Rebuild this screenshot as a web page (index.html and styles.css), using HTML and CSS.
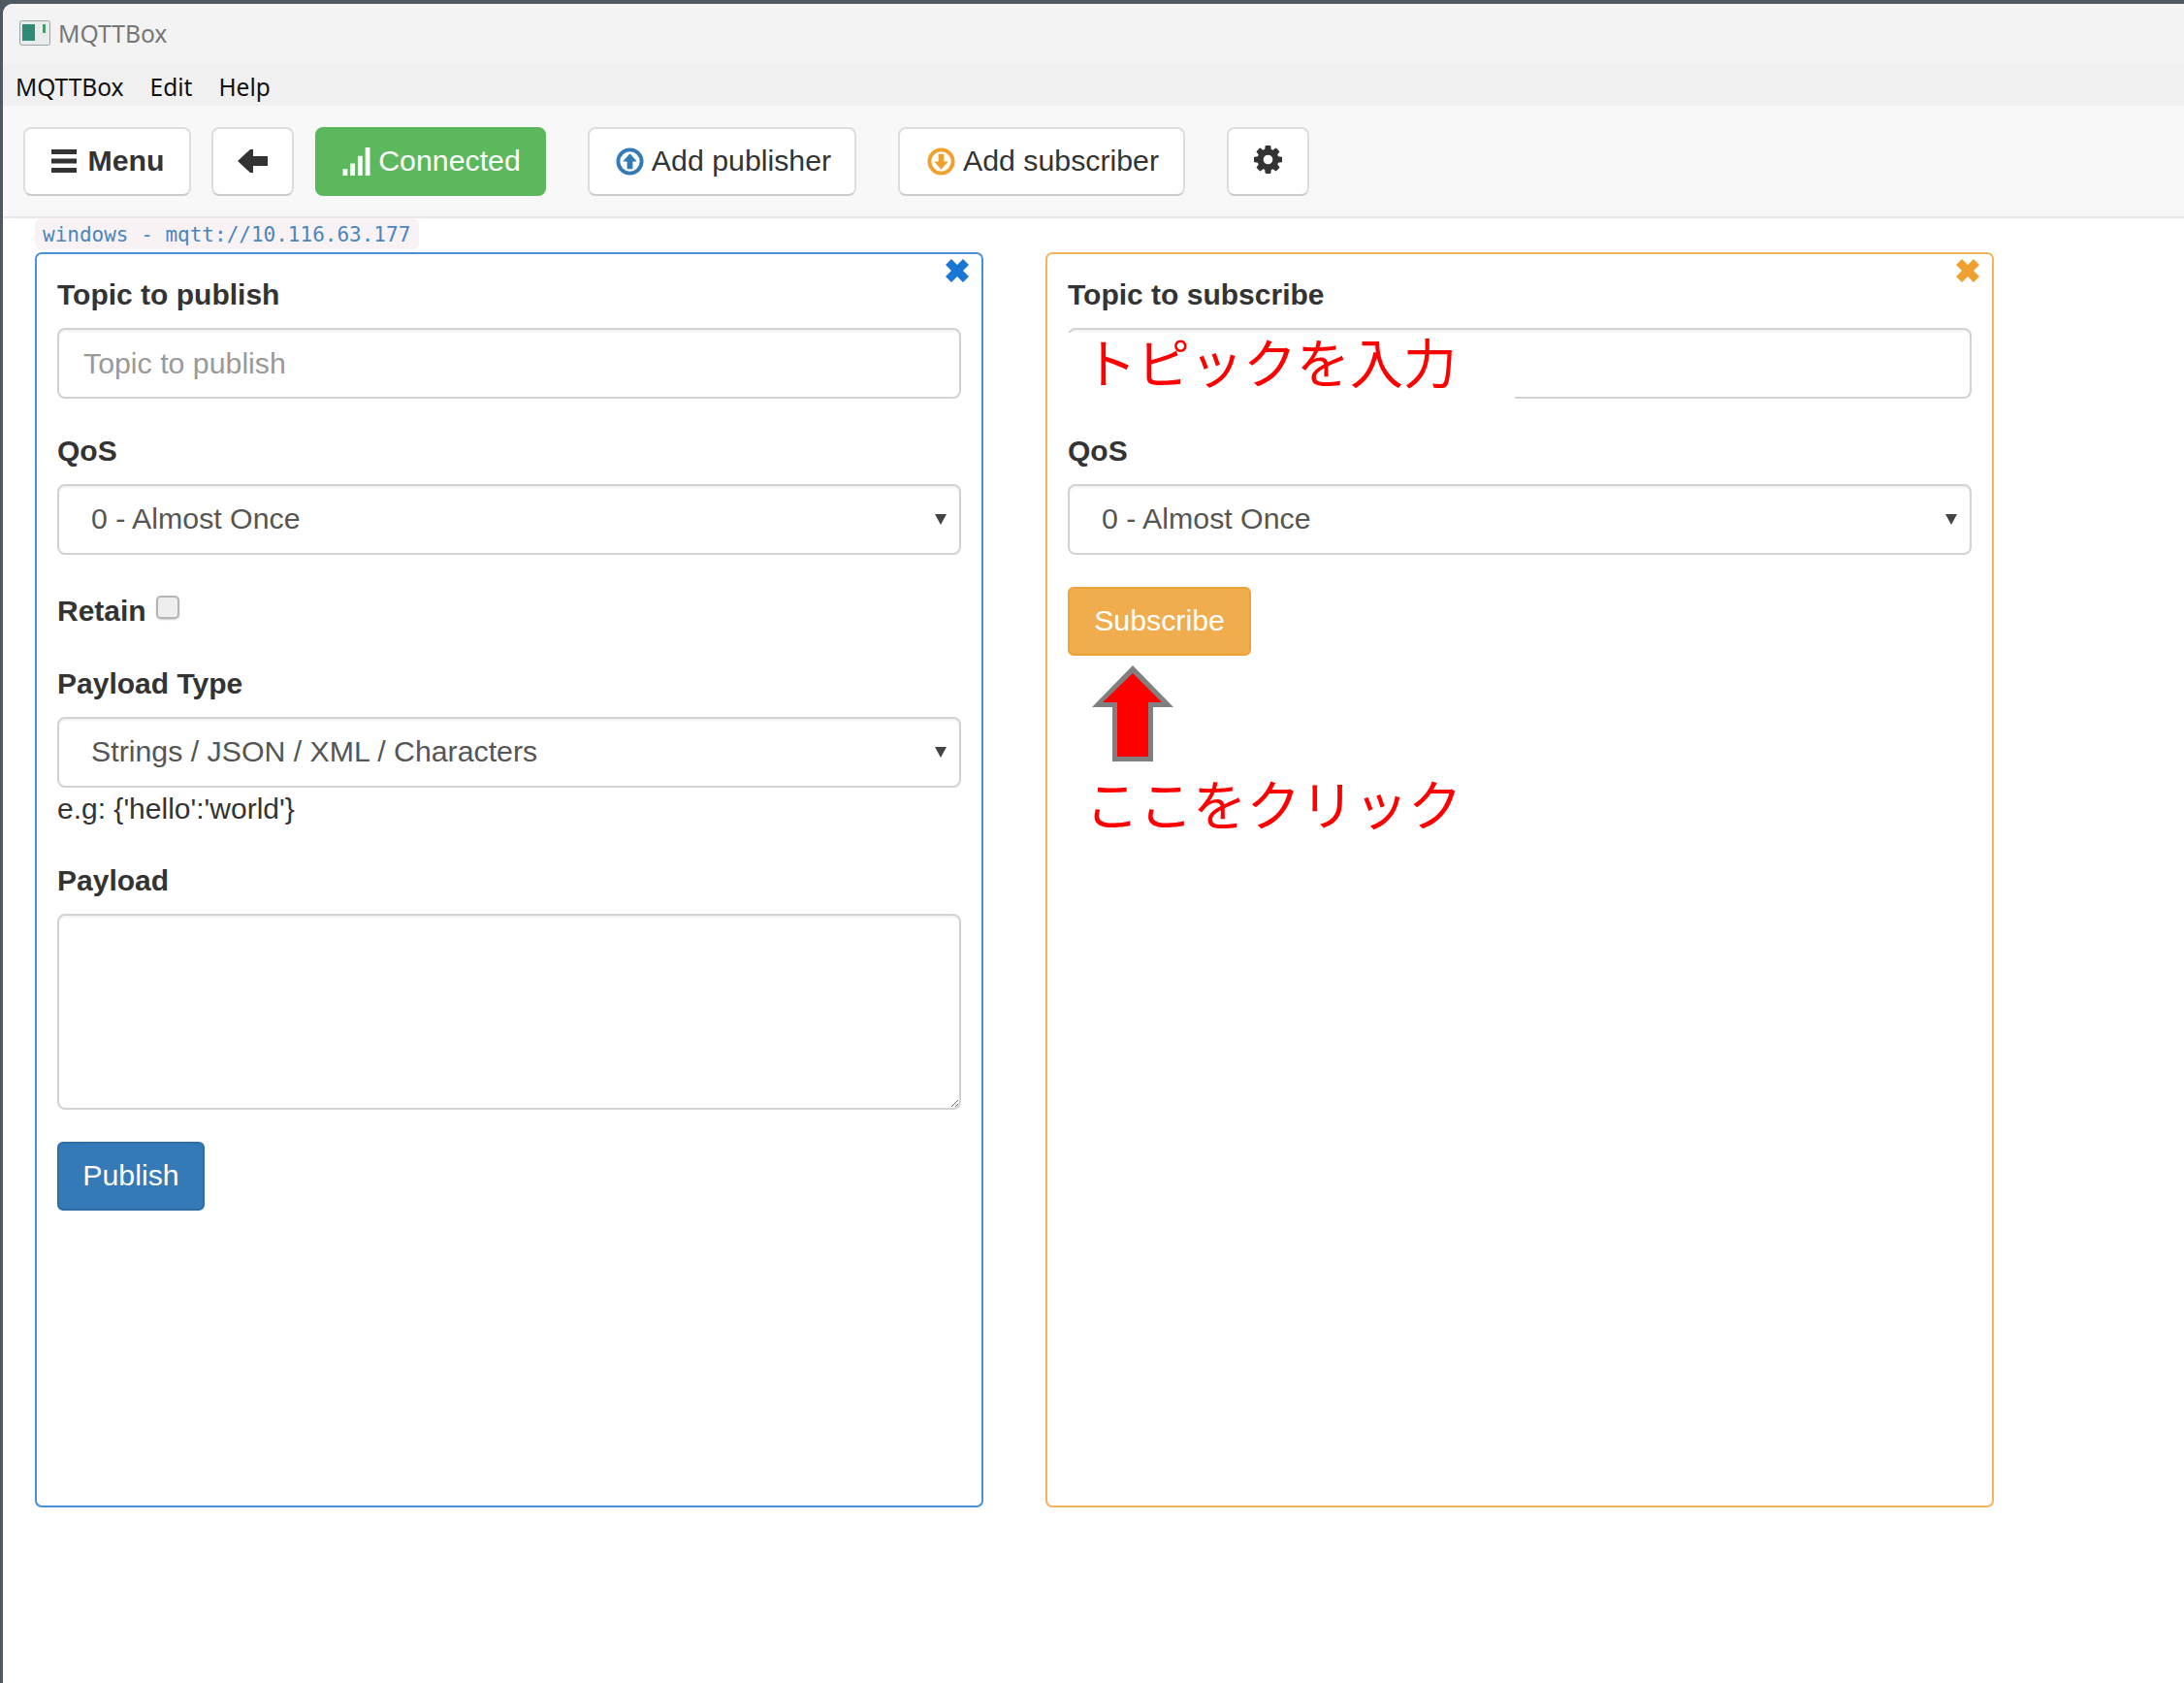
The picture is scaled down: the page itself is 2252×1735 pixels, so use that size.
FILE: index.html
```html
<!DOCTYPE html>
<html lang="en">
<head>
    <meta charset="UTF-8">
    <meta name="viewport" content="width=device-width, initial-scale=1.0">
    <title>MQTTBox</title>
    <link rel="stylesheet" href="styles.css">
</head>
<body>
<div class="window">
    <div class="titlebar">
        <svg class="app-icon" viewBox="0 0 32 26">
            <rect x="0.5" y="0.5" width="31" height="25" rx="2" fill="#e8ecec" stroke="#9aa3a3"/>
            <rect x="3" y="4" width="13" height="17" fill="#2f8a76"/>
            <rect x="24" y="4" width="3" height="9" fill="#4a9a6a"/>
        </svg>
        <span>MQTTBox</span>
    </div>
    <div class="menubar">
        <span>MQTTBox</span>
        <span>Edit</span>
        <span>Help</span>
    </div>

    <nav class="toolbar">
        <button class="btn btn-menu">
            <svg class="icon" viewBox="0 0 26 24"><path d="M0 0h26v5H0zM0 9.500h26v5H0zM0 19h26v5H0z" fill="#333"/></svg>
            Menu
        </button>
        <button class="btn btn-back">
            <svg class="icon" viewBox="0 0 31 24"><path d="M0 12 13 0h3v7h15v10H16v7h-3z" fill="#333"/></svg>
        </button>
        <button class="btn btn-connected">
            <svg class="icon" viewBox="0 0 29 30"><path d="M0 23h5v7H0zM8 17h5v13H8zM16 9h5v21h-5zM24 0h5v30h-5z" fill="#fff"/></svg>
            Connected
        </button>
        <button class="btn btn-publisher">
            <svg class="icon" viewBox="0 0 30 30">
                <circle cx="15" cy="15" r="12.500" fill="none" stroke="#337ab7" stroke-width="4"/>
                <path d="M15 6.500 22.500 15H18v8h-6v-8H7.500z" fill="#337ab7"/>
            </svg>
            Add publisher
        </button>
        <button class="btn btn-subscriber">
            <svg class="icon" viewBox="0 0 30 30">
                <circle cx="15" cy="15" r="12.500" fill="none" stroke="#f0a030" stroke-width="4"/>
                <path d="M15 23.500 22.500 15H18V7h-6v8H7.500z" fill="#f0a030"/>
            </svg>
            Add subscriber
        </button>
        <button class="btn btn-settings">
            <svg class="icon" viewBox="0 0 1536 1536"><path fill="#333" d="M1024 768q0-106-75-181t-181-75-181 75-75 181 75 181 181 75 181-75 75-181zm512-109v222q0 12-8 23t-20 13l-185 28q-19 54-39 91 35 50 107 138 10 12 10 25t-9 23q-27 37-99 108t-94 71q-12 0-26-9l-138-108q-44 23-91 38-16 136-29 186-7 28-36 28h-222q-14 0-24.500-8.500t-11.500-21.500l-28-184q-49-16-90-37l-141 107q-10 9-25 9-14 0-25-11-126-114-165-168-7-10-7-23 0-12 8-23 15-21 51-66.500t54-70.500q-27-50-41-99l-183-27q-13-2-21-12.500t-8-23.500v-222q0-12 8-23t19-13l186-28q14-46 39-92-40-57-107-138-10-12-10-24 0-10 9-23 26-36 98.500-107.500t94.500-71.500q13 0 26 10l138 107q44-23 91-38 16-136 29-186 7-28 36-28h222q14 0 24.500 8.500t11.500 21.500l28 184q49 16 90 37l142-107q9-9 24-9 13 0 25 10 129 119 165 170 7 8 7 22 0 12-8 23-15 21-51 66.500t-54 70.500q26 50 41 98l183 28q13 2 21 12.500t8 23.500z"/></svg>
        </button>
    </nav>

    <main class="content">
        <code class="broker">windows - mqtt://10.116.63.177</code>
        <div class="panels">
            <section class="panel panel-publish">
                <svg class="close" viewBox="0 0 26 26"><path d="M7 1 13 7l6-6 6 6-6 6 6 6-6 6-6-6-6 6-6-6 6-6-6-6z"/></svg>
                <div class="field">
                    <label>Topic to publish</label>
                    <input type="text" class="form-control topic-input" placeholder="Topic to publish">
                </div>
                <div class="field">
                    <label>QoS</label>
                    <div class="select-wrap">
                        <select class="form-control"><option>0 - Almost Once</option></select>
                    </div>
                </div>
                <div class="field field-retain">
                    <label>Retain</label>
                    <input type="checkbox" class="check">
                </div>
                <div class="field field-type">
                    <label>Payload Type</label>
                    <div class="select-wrap">
                        <select class="form-control"><option>Strings / JSON / XML / Characters</option></select>
                    </div>
                    <div class="hint">e.g: {'hello':'world'}</div>
                </div>
                <div class="field">
                    <label>Payload</label>
                    <textarea class="form-control payload"></textarea>
                </div>
                <button class="btn-submit btn-publish">Publish</button>
            </section>

            <section class="panel panel-subscribe">
                <svg class="close" viewBox="0 0 26 26"><path d="M7 1 13 7l6-6 6 6-6 6 6 6-6 6-6-6-6 6-6-6 6-6-6-6z"/></svg>
                <div class="field">
                    <label>Topic to subscribe</label>
                    <div class="topic-wrap">
                        <input type="text" class="form-control topic-input">
                        <div class="note-topic">トピックを入力</div>
                    </div>
                </div>
                <div class="field">
                    <label>QoS</label>
                    <div class="select-wrap">
                        <select class="form-control"><option>0 - Almost Once</option></select>
                    </div>
                </div>
                <div class="subscribe-wrap">
                    <button class="btn-submit btn-subscribe">Subscribe</button>
                    <svg class="note-arrow" viewBox="0 0 84 99">
                        <path d="M42 0 84 43H63v56H21V43H0z" fill="#808080"/>
                        <path d="M42 8 72 38H58v56H26V38H11z" fill="#f00"/>
                    </svg>
                    <div class="note-click">ここをクリック</div>
                </div>
            </section>
        </div>
    </main>
</div>
</body>
</html>
```

FILE: styles.css
```css
* {
    box-sizing: border-box;
}

body {
    margin: 0;
    min-height: 1735px;
    background: #50595f;
    font-family: "Liberation Sans", Arial, sans-serif;
    color: #333;
}

.window {
    margin: 4px 0 0 3px;
    min-height: 1731px;
    background: #fff;
    border-top-left-radius: 10px;
    overflow: hidden;
}

/* window chrome */
.titlebar {
    display: flex;
    align-items: center;
    gap: 8px;
    height: 62px;
    padding-left: 17px;
    padding-bottom: 2px;
    background: #f3f3f3;
    font-family: "Noto Sans", sans-serif;
    font-size: 24.700px;
    color: #777;
}

.app-icon {
    width: 32px;
    height: 26px;
}

.menubar {
    display: flex;
    gap: 27px;
    height: 43px;
    padding-left: 13px;
    padding-top: 3px;
    align-items: center;
    background: #f0f0f0;
    font-family: "Noto Sans", sans-serif;
    font-size: 24.500px;
    color: #111;
}

.toolbar {
    display: flex;
    align-items: center;
    height: 116px;
    padding-left: 21px;
    background: #f8f8f8;
    border-bottom: 2px solid #e7e7e7;
}

.btn {
    display: flex;
    align-items: center;
    justify-content: center;
    height: 71px;
    background: #fff;
    border: 2px solid #ddd;
    border-bottom-color: #ccc;
    border-radius: 8px;
    font-family: inherit;
    font-size: 30.300px;
    color: #333;
    padding: 0;
}

.icon {
    width: 29px;
    height: 29px;
    flex: none;
}

.btn-menu {
    width: 173px;
    gap: 11px;
    padding-left: 2px;
    font-weight: bold;
    margin-right: 21px;
}

.btn-menu .icon {
    width: 26px;
    height: 24px;
}

.btn-back {
    width: 85px;
    margin-right: 22px;
}

.btn-back .icon {
    width: 31px;
    height: 24px;
}

.btn-connected {
    width: 238px;
    gap: 8px;
    padding-left: 2px;
    background: #5cb85c;
    border-color: #5cb85c;
    color: #fff;
    margin-right: 43px;
}

.btn-publisher {
    width: 277px;
    gap: 8px;
    padding-left: 3px;
    margin-right: 43px;
}

.btn-subscriber {
    width: 296px;
    gap: 8px;
    padding-left: 3px;
    margin-right: 43px;
}

.btn-settings {
    width: 85px;
    padding-bottom: 4px;
}

/* connection + panels */
.content {
    padding-left: 33px;
}

.broker {
    display: block;
    width: 396px;
    height: 32px;
    line-height: 35px;
    padding-left: 8px;
    background: #f9f2f4;
    border-radius: 6px;
    font-family: "DejaVu Sans Mono", monospace;
    font-size: 21px;
    color: #4a86bd;
}

.panels {
    display: flex;
    gap: 64px;
    margin-top: 3px;
}

.panel {
    position: relative;
    width: 978px;
    height: 1294px;
    padding: 21px 21px 0;
    border: 2px solid;
    border-radius: 7px;
}

.panel-publish {
    border-color: #4a90d9;
}

.panel-subscribe {
    border-color: #f4b35e;
}

.close {
    position: absolute;
    top: 4px;
    right: 12px;
    width: 26px;
    height: 26px;
}

.panel-publish .close {
    fill: #1976d2;
}

.panel-subscribe .close {
    fill: #f0a030;
}

.field {
    margin-bottom: 33px;
}

.field label {
    display: block;
    height: 42px;
    line-height: 42px;
    margin-bottom: 13px;
    font-size: 30px;
    font-weight: bold;
}

.form-control {
    display: block;
    width: 100%;
    height: 73px;
    padding: 0 26px 2px;
    background: #fff;
    border: 2px solid #d2d2d2;
    border-radius: 8px;
    box-shadow: inset 0 2px 2px rgba(0, 0, 0, .05);
    font-family: inherit;
    font-size: 30.300px;
    color: #555;
}

.topic-input {
    padding: 0 25px;
}

.form-control::placeholder {
    color: #999;
}

.select-wrap {
    position: relative;
}

.select-wrap select {
    appearance: none;
    padding-left: 33px;
}

.select-wrap::after {
    content: "";
    position: absolute;
    right: 15px;
    top: 31px;
    border-left: 6px solid transparent;
    border-right: 6px solid transparent;
    border-top: 11px solid #444;
}

.field-retain {
    display: flex;
    align-items: flex-start;
    gap: 10px;
    height: 42px;
    margin-top: 37px;
}

.check {
    appearance: none;
    width: 24px;
    height: 24px;
    margin: 5px 0 0;
    background: #eee;
    border: 2px solid #b5b5b5;
    border-radius: 5px;
    box-shadow: 0 1px 2px rgba(0, 0, 0, .2);
}

.hint {
    margin-top: 1px;
    height: 41px;
    line-height: 42px;
    font-size: 30px;
}

.payload {
    height: 202px;
    resize: vertical;
}

.btn-submit {
    height: 71px;
    border-radius: 6px;
    border: 2px solid;
    font-family: inherit;
    font-size: 30.300px;
    color: #fff;
    padding: 0 0 2px;
}

.btn-publish {
    width: 152px;
    background: #337ab7;
    border-color: #2e6da4;
}

.btn-subscribe {
    width: 189px;
    background: #f0ad4e;
    border-color: #eea236;
}

/* red notes pasted over the screenshot */
.topic-wrap,
.subscribe-wrap {
    position: relative;
}

.note-topic {
    position: absolute;
    left: 0;
    top: 5px;
    width: 461px;
    height: 70px;
    padding-left: 16px;
    background: #fff;
    font-family: "Noto Sans CJK JP", sans-serif;
    font-size: 55px;
    line-height: 56px;
    color: #f00;
    white-space: nowrap;
}

.note-arrow {
    position: absolute;
    left: 25px;
    top: 81px;
    width: 84px;
    height: 99px;
}

.note-click {
    position: absolute;
    left: 18px;
    top: 189px;
    font-family: "Noto Sans CJK JP", sans-serif;
    font-size: 55.500px;
    line-height: 66px;
    color: #f00;
    white-space: nowrap;
}
```
